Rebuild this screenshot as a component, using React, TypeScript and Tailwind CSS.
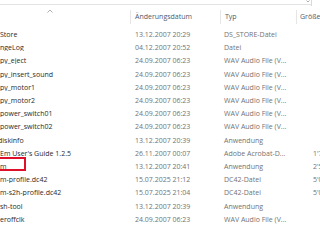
import React from 'react';

type Row = { name: string; date: string; type: string; size?: string; shift?: number };

const rows: Row[] = [
  { name: 'Store', date: '13.12.2007 20:29', type: 'DS_STORE-Datei' },
  { name: 'ngeLog', date: '04.12.2007 20:52', type: 'Datei' },
  { name: 'py_eject', date: '24.09.2007 06:23', type: 'WAV Audio File (V...' },
  { name: 'py_insert_sound', date: '24.09.2007 06:23', type: 'WAV Audio File (V...' },
  { name: 'py_motor1', date: '24.09.2007 06:23', type: 'WAV Audio File (V...' },
  { name: 'py_motor2', date: '24.09.2007 06:23', type: 'WAV Audio File (V...' },
  { name: 'power_switch01', date: '24.09.2007 06:23', type: 'WAV Audio File (V...' },
  { name: 'power_switch02', date: '24.09.2007 06:23', type: 'WAV Audio File (V...' },
  { name: 'diskinfo', date: '13.12.2007 20:39', type: 'Anwendung', shift: -2 },
  { name: "Em User's Guide 1.2.5", date: '26.11.2007 00:07', type: 'Adobe Acrobat-D...', size: "1'752 KB" },
  { name: 'm', date: '13.12.2007 20:41', type: 'Anwendung', size: "2'544 KB" },
  { name: 'm-profile.dc42', date: '15.07.2025 21:12', type: 'DC42-Datei', size: "5'001 KB" },
  { name: 'm-s2h-profile.dc42', date: '15.07.2025 21:04', type: 'DC42-Datei', size: "5'001 KB" },
  { name: 'sh-tool', date: '13.12.2007 20:39', type: 'Anwendung' },
  { name: 'eroffclk', date: '24.09.2007 06:23', type: 'WAV Audio File (V...' },
];

export default function App() {
  return (
    <div
      className="relative w-[320px] h-[240px] overflow-hidden bg-white text-[7px] leading-none"
      style={{ fontFamily: '"Open Sans", "Noto Sans", sans-serif' }}
    >
      {/* top edge of the toolbar */}
      <div className="flex h-[5px]">
        <div className="w-[311px] border-b border-[#e3e3e3]" />
        <div className="w-px h-[6px] bg-[#d9d9d9]" />
      </div>
      <svg className="absolute left-[306px] top-0" width="4" height="3" viewBox="0 0 4 3">
        <path d="M0.5 0.5 L2 2 L3.5 0.5" fill="none" stroke="#8a8a8a" strokeWidth="0.7" />
      </svg>

      {/* column headers */}
      <div className="relative flex h-[23px] items-center text-[#505a6a]">
        <svg className="absolute left-[47px] top-[4px]" width="6" height="4" viewBox="0 0 6 4">
          <path d="M0.5 3.5 L3 1 L5.5 3.5" fill="none" stroke="#9a9a9a" strokeWidth="0.8" />
        </svg>
        <div className="w-[130px] shrink-0" />
        <div className="flex w-[90px] shrink-0 items-center h-full">
          <div className="w-px h-[14px] bg-[#e6e6e6]" />
          <span className="ml-[4px]">Änderungsdatum</span>
        </div>
        <div className="flex w-[76px] shrink-0 items-center h-full">
          <div className="w-px h-[14px] bg-[#e6e6e6]" />
          <span className="ml-[4px]">Typ</span>
        </div>
        <div className="flex flex-1 items-center h-full">
          <div className="w-px h-[14px] bg-[#e6e6e6]" />
          <span className="ml-[3px] whitespace-nowrap">Größe</span>
        </div>
      </div>

      {/* file rows */}
      <div className="flex flex-col">
        {rows.map((r) => (
          <div key={r.name} className="flex h-[13.2px] items-center whitespace-nowrap">
            <div className="w-[135px] shrink-0 overflow-hidden text-[#2a2a2a]">
              <span className="block" style={{ marginLeft: r.shift ?? 0 }}>{r.name}</span>
            </div>
            <div className="w-[89px] shrink-0 text-[#737373]">{r.date}</div>
            <div className="w-[89px] shrink-0 text-[#737373]">{r.type}</div>
            <div className="w-[60px] shrink-0 text-[#737373]">{r.size}</div>
          </div>
        ))}
      </div>

      {/* highlight around the selected name */}
      <div className="absolute left-[-3px] top-[157px] w-[29px] h-[14px] border-2 border-[#e0102a]" />
    </div>
  );
}
